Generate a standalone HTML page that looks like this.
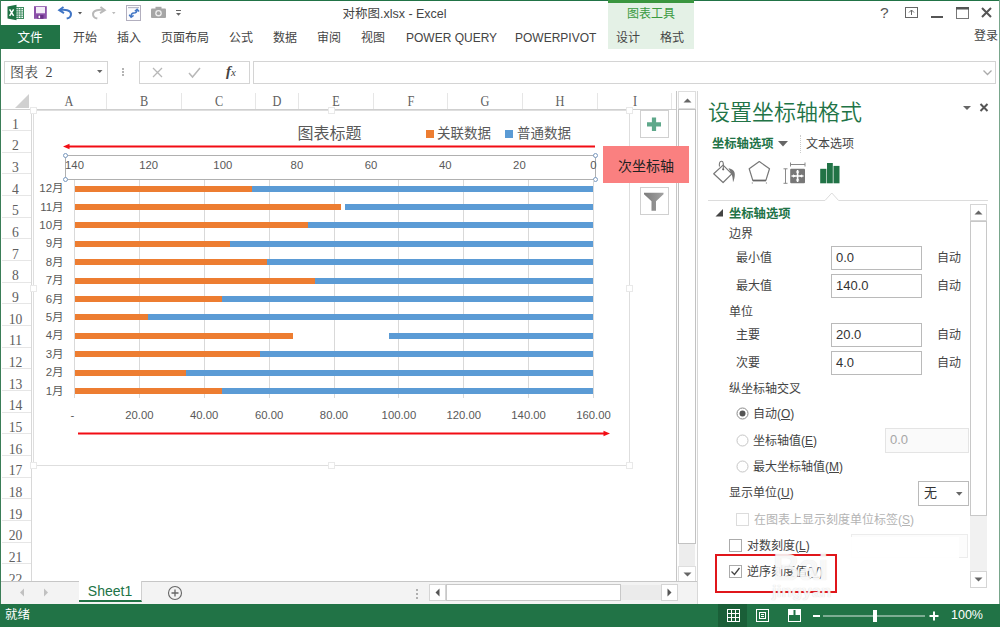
<!DOCTYPE html><html><head><meta charset="utf-8"><title>对称图.xlsx - Excel</title><style>
*{box-sizing:border-box;margin:0;padding:0}
html,body{width:1000px;height:627px;overflow:hidden;background:#fff}
body{position:relative;font-family:"Liberation Sans","Noto Sans CJK SC",sans-serif;font-size:12px;color:#444}
.a{position:absolute}
.t{position:absolute;white-space:nowrap;line-height:1}
.c{transform:translateX(-50%)}
.r{transform:translateX(-100%)}
.serif{font-family:"Liberation Serif","Noto Serif CJK SC",serif}
.tab{position:absolute;top:31.500px;font-size:12px;color:#444;white-space:nowrap;line-height:1}
.hdr{position:absolute;top:94px;font-size:15px;color:#606060;line-height:1;transform:translateX(-50%) scaleX(.82)}
.rn{position:absolute;font-size:15.500px;color:#606060;transform:scaleX(.88);line-height:1;width:31px;text-align:center;left:0}
.cat{position:absolute;font-size:11.5px;color:#595959;line-height:1;white-space:nowrap;transform:translateX(-100%);left:63.600px}
.ax{position:absolute;font-size:11.3px;color:#595959;line-height:1;white-space:nowrap;transform:translateX(-50%)}
.lbl{position:absolute;font-size:12px;color:#444;line-height:1;white-space:nowrap}
.inp{position:absolute;border:1px solid #bababa;background:#fff;font-size:13px;color:#333;line-height:1;padding:4px 0 0 4px}
.auto{position:absolute;font-size:12px;color:#444;line-height:1;left:937px}
</style></head><body>
<div class="a" style="left:0;top:0;width:1000px;height:1px;background:#217346"></div>
<div class="a" style="left:0;top:0;width:1px;height:627px;background:#3a7d57"></div>
<div class="a" style="left:999px;top:0;width:1px;height:604px;background:#79a68c;z-index:50"></div>
<div class="t c" style="left:394.500px;top:7.500px;font-size:12.500px;color:#444">对称图.xlsx - Excel</div>
<div class="a" style="left:608px;top:1px;width:86px;height:48px;background:#e4f1e6"></div>
<div class="a" style="left:608px;top:0;width:86px;height:3px;background:#3a963f"></div>
<div class="t c" style="left:651px;top:7.500px;font-size:12px;color:#3a9a3f">图表工具</div>
<div class="a" style="left:0;top:25px;width:60px;height:24px;background:#217346"></div>
<div class="t c" style="left:30px;top:31.500px;font-size:12.500px;color:#fff">文件</div>
<div class="tab" style="left:73px">开始</div>
<div class="tab" style="left:117px">插入</div>
<div class="tab" style="left:161px">页面布局</div>
<div class="tab" style="left:229px">公式</div>
<div class="tab" style="left:273px">数据</div>
<div class="tab" style="left:317px">审阅</div>
<div class="tab" style="left:361px">视图</div>
<div class="tab" style="left:406px">POWER QUERY</div>
<div class="tab" style="left:515px">POWERPIVOT</div>
<div class="tab" style="left:616px">设计</div>
<div class="tab" style="left:660px">格式</div>
<div class="tab" style="left:974px;top:30px">登录</div>
<div class="t" style="left:880px;top:5px;font-size:15.500px;color:#555">?</div>
<svg class="a" style="left:900px;top:0" width="100" height="24" viewBox="0 0 100 24"><rect x="5.5" y="7.5" width="12" height="10" fill="none" stroke="#666"/><path d="M11.5 15v-5m-2.5 2.5l2.5-2.5l2.500 2.500" stroke="#666" fill="none"/><rect x="31" y="16" width="12" height="2" fill="#555"/><rect x="56.500" y="7.500" width="12" height="11" fill="none" stroke="#777" stroke-width="1"/><rect x="56" y="7" width="13" height="2.500" fill="#555"/><path d="M82 8l9 9m0-9l-9 9" stroke="#555" stroke-width="2" fill="none"/></svg>
<svg class="a" style="left:0;top:0" width="200" height="26" viewBox="0 0 200 26">
<rect x="15.500" y="7.500" width="8" height="11" fill="#fff" stroke="#3c8a5e"/><path d="M15.500 9.700h8M15.500 11.900h8M15.500 14.100h8M15.500 16.300h8M18.200 7.500v11M20.900 7.500v11" stroke="#3c8a5e" stroke-width=".9" fill="none"/>
<path d="M7.500 6.500l9-1.700v15.400l-9-1.700z" fill="#1f7244"/>
<path d="M9.600 9.300l4 6.500M13.600 9.300l-4 6.500" stroke="#fff" stroke-width="1.500" fill="none"/>
<rect x="34" y="6.200" width="12.800" height="12.600" fill="#8b50a9"/><rect x="36" y="7" width="9" height="6.300" fill="#f3ecf7"/><rect x="37.500" y="15" width="6" height="3.800" fill="#6a3088"/><rect x="38.500" y="15.600" width="1.600" height="2.600" fill="#fff"/>
<path d="M63.500 7l-4.300 3.100l4.800 3" fill="none" stroke="#3f74c4" stroke-width="1.900"/><path d="M59.800 10.100c5-.6 11-.2 11.200 3.800c.1 2.800-1.800 4.200-4.300 4.700" fill="none" stroke="#3f74c4" stroke-width="2"/>
<path d="M78 12h4l-2 2.500z" fill="#555"/>
<path d="M100.500 7l4.300 3.100l-4.800 3" fill="none" stroke="#b9b9b9" stroke-width="1.900"/><path d="M104.200 10.100c-5-.6-11-.2-11.200 3.800c-.1 2.800 1.800 4.200 4.300 4.700" fill="none" stroke="#b9b9b9" stroke-width="2"/>
<path d="M112 12h3.500l-1.750 2.200z" fill="#bbb"/>
<rect x="126.500" y="5.500" width="14" height="15" fill="#fbfbfd" stroke="#b2afbe"/><rect x="128" y="7" width="11" height="1.200" fill="#b9b9c6"/><path d="M131.200 16.800c-.5-2.500 1-3.800 2.600-3.800c1.800 0 3.200-1 3.200-3.300" fill="none" stroke="#3f74c4" stroke-width="1.500"/><path d="M134.800 11.200l2.300-2l2 2.300" fill="none" stroke="#3f74c4" stroke-width="1.400"/><path d="M129.200 14.800l1.900 2.400l2.500-1.800" fill="none" stroke="#3f74c4" stroke-width="1.400"/>
<rect x="151" y="8.500" width="15" height="9.500" rx="1" fill="#a6a6a6"/><rect x="155.500" y="6.800" width="6" height="2.500" fill="#a6a6a6"/><circle cx="158.500" cy="13.200" r="3.300" fill="#eee"/><circle cx="158.500" cy="13.200" r="1.900" fill="#a6a6a6"/>
<rect x="176" y="10" width="5" height="1" fill="#666"/><path d="M176 13h5l-2.500 2.800z" fill="#666"/>
</svg>
<div class="a" style="left:4px;top:61px;width:104px;height:23px;border:1px solid #d4d4d4;background:#fff"></div>
<div class="t serif" style="left:10px;top:66px;font-size:14px;color:#444;word-spacing:4px">图表 2</div>
<svg class="a" style="left:97px;top:70px" width="6" height="4"><path d="M0 0h5.500l-2.750 3z" fill="#666"/></svg>
<div class="a" style="left:122px;top:68px;width:2px;height:2px;background:#b4b4b4;box-shadow:0 3px 0 #b4b4b4,0 6px 0 #b4b4b4"></div>
<div class="a" style="left:139px;top:61px;width:111px;height:23px;border:1px solid #d4d4d4;background:#fff"></div>
<svg class="a" style="left:139px;top:61px" width="108" height="23" viewBox="0 0 108 23"><path d="M14 7l9 9m0-9l-9 9" stroke="#b8b8b8" stroke-width="1.300" fill="none"/><path d="M50 12l3.500 4l7.500-9" stroke="#b8b8b8" stroke-width="1.500" fill="none"/></svg>
<div class="t serif" style="left:226px;top:64px;font-size:15px;color:#444;font-style:italic"><b>f</b><span style="font-size:11px">x</span></div>
<div class="a" style="left:253px;top:61px;width:743px;height:23px;border:1px solid #d4d4d4;background:#fff"></div>
<svg class="a" style="left:982px;top:69px" width="12" height="8"><path d="M1.500 1.500l4 4l4-4" stroke="#aaa" stroke-width="1.300" fill="none"/></svg>
<div class="a" style="left:1px;top:91px;width:675px;height:19px;background:#fff;border-bottom:1px solid #cfcfcf"></div>
<svg class="a" style="left:14px;top:94px" width="16" height="15"><path d="M15 0v14h-14z" fill="#d0d0d0"/></svg>
<div class="a" style="left:106px;top:93px;width:1px;height:16px;background:#e6e6e6"></div>
<div class="a" style="left:181px;top:93px;width:1px;height:16px;background:#e6e6e6"></div>
<div class="a" style="left:255px;top:93px;width:1px;height:16px;background:#e6e6e6"></div>
<div class="a" style="left:298px;top:93px;width:1px;height:16px;background:#e6e6e6"></div>
<div class="a" style="left:373px;top:93px;width:1px;height:16px;background:#e6e6e6"></div>
<div class="a" style="left:447px;top:93px;width:1px;height:16px;background:#e6e6e6"></div>
<div class="a" style="left:522px;top:93px;width:1px;height:16px;background:#e6e6e6"></div>
<div class="a" style="left:597px;top:93px;width:1px;height:16px;background:#e6e6e6"></div>
<div class="a" style="left:671px;top:93px;width:1px;height:16px;background:#e6e6e6"></div>
<div class="hdr serif" style="left:69.0px">A</div>
<div class="hdr serif" style="left:144.0px">B</div>
<div class="hdr serif" style="left:218.5px">C</div>
<div class="hdr serif" style="left:277.0px">D</div>
<div class="hdr serif" style="left:336.0px">E</div>
<div class="hdr serif" style="left:410.5px">F</div>
<div class="hdr serif" style="left:485.0px">G</div>
<div class="hdr serif" style="left:560.0px">H</div>
<div class="hdr serif" style="left:634.5px">I</div>
<div class="a" style="left:31px;top:110px;width:1px;height:471px;background:#d8d8d8"></div>
<div class="rn serif" style="top:115.5px">1</div>
<div class="a" style="left:2px;top:130px;width:29px;height:1px;background:#e6e6e6"></div>
<div class="rn serif" style="top:137.2px">2</div>
<div class="a" style="left:2px;top:152px;width:29px;height:1px;background:#e6e6e6"></div>
<div class="rn serif" style="top:158.8px">3</div>
<div class="a" style="left:2px;top:173px;width:29px;height:1px;background:#e6e6e6"></div>
<div class="rn serif" style="top:180.5px">4</div>
<div class="a" style="left:2px;top:195px;width:29px;height:1px;background:#e6e6e6"></div>
<div class="rn serif" style="top:202.2px">5</div>
<div class="a" style="left:2px;top:217px;width:29px;height:1px;background:#e6e6e6"></div>
<div class="rn serif" style="top:223.9px">6</div>
<div class="a" style="left:2px;top:238px;width:29px;height:1px;background:#e6e6e6"></div>
<div class="rn serif" style="top:245.5px">7</div>
<div class="a" style="left:2px;top:260px;width:29px;height:1px;background:#e6e6e6"></div>
<div class="rn serif" style="top:267.2px">8</div>
<div class="a" style="left:2px;top:282px;width:29px;height:1px;background:#e6e6e6"></div>
<div class="rn serif" style="top:288.9px">9</div>
<div class="a" style="left:2px;top:303px;width:29px;height:1px;background:#e6e6e6"></div>
<div class="rn serif" style="top:310.5px">10</div>
<div class="a" style="left:2px;top:325px;width:29px;height:1px;background:#e6e6e6"></div>
<div class="rn serif" style="top:332.2px">11</div>
<div class="a" style="left:2px;top:347px;width:29px;height:1px;background:#e6e6e6"></div>
<div class="rn serif" style="top:353.9px">12</div>
<div class="a" style="left:2px;top:368px;width:29px;height:1px;background:#e6e6e6"></div>
<div class="rn serif" style="top:375.5px">13</div>
<div class="a" style="left:2px;top:390px;width:29px;height:1px;background:#e6e6e6"></div>
<div class="rn serif" style="top:397.2px">14</div>
<div class="a" style="left:2px;top:412px;width:29px;height:1px;background:#e6e6e6"></div>
<div class="rn serif" style="top:418.9px">15</div>
<div class="a" style="left:2px;top:433px;width:29px;height:1px;background:#e6e6e6"></div>
<div class="rn serif" style="top:440.6px">16</div>
<div class="a" style="left:2px;top:455px;width:29px;height:1px;background:#e6e6e6"></div>
<div class="rn serif" style="top:462.2px">17</div>
<div class="a" style="left:2px;top:477px;width:29px;height:1px;background:#e6e6e6"></div>
<div class="rn serif" style="top:483.9px">18</div>
<div class="a" style="left:2px;top:498px;width:29px;height:1px;background:#e6e6e6"></div>
<div class="rn serif" style="top:505.6px">19</div>
<div class="a" style="left:2px;top:520px;width:29px;height:1px;background:#e6e6e6"></div>
<div class="rn serif" style="top:527.2px">20</div>
<div class="a" style="left:2px;top:542px;width:29px;height:1px;background:#e6e6e6"></div>
<div class="rn serif" style="top:548.9px">21</div>
<div class="a" style="left:2px;top:563px;width:29px;height:1px;background:#e6e6e6"></div>
<div class="rn serif" style="top:570.6px">22</div>
<div class="a" style="left:676px;top:91px;width:1px;height:494px;background:#c6c6c6"></div>
<div class="a" style="left:33px;top:110px;width:597px;height:356px;border:1px solid #dedede;background:#fff"></div>
<div class="a" style="left:30px;top:107px;width:7px;height:7px;border:1px solid #e9e9e9;background:#fff"></div>
<div class="a" style="left:328px;top:107px;width:7px;height:7px;border:1px solid #e9e9e9;background:#fff"></div>
<div class="a" style="left:626px;top:107px;width:7px;height:7px;border:1px solid #e9e9e9;background:#fff"></div>
<div class="a" style="left:30px;top:285px;width:7px;height:7px;border:1px solid #e9e9e9;background:#fff"></div>
<div class="a" style="left:626px;top:285px;width:7px;height:7px;border:1px solid #e9e9e9;background:#fff"></div>
<div class="a" style="left:30px;top:462px;width:7px;height:7px;border:1px solid #e9e9e9;background:#fff"></div>
<div class="a" style="left:328px;top:462px;width:7px;height:7px;border:1px solid #e9e9e9;background:#fff"></div>
<div class="a" style="left:626px;top:462px;width:7px;height:7px;border:1px solid #e9e9e9;background:#fff"></div>
<div class="t c" style="left:329.500px;top:126px;font-size:16px;color:#595959">图表标题</div>
<div class="a" style="left:426px;top:130px;width:8px;height:8px;background:#ed7d31"></div>
<div class="t" style="left:437px;top:127px;font-size:13.500px;color:#595959">关联数据</div>
<div class="a" style="left:505px;top:130px;width:8px;height:8px;background:#5b9bd5"></div>
<div class="t" style="left:517px;top:127px;font-size:13.500px;color:#595959">普通数据</div>
<svg class="a" style="left:55px;top:140px" width="560" height="12"><path d="M13 6.500H540" stroke="#f20d14" stroke-width="1.800"/><path d="M8 6.500l6.500-2.800v5.600z" fill="#f20d14"/></svg>
<svg class="a" style="left:70px;top:427px" width="545" height="12"><path d="M8 6.500H534" stroke="#f20d14" stroke-width="1.800"/><path d="M540 6.500l-6.500-2.800v5.600z" fill="#f20d14"/></svg>
<div class="a" style="left:65px;top:155px;width:531px;height:25px;border:1px solid #b0b0b0"></div>
<div class="a" style="left:62.5px;top:152.5px;width:5.500px;height:5.500px;border:1px solid #7a9abf;border-radius:50%;background:#fff"></div>
<div class="a" style="left:592.5px;top:152.5px;width:5.500px;height:5.500px;border:1px solid #7a9abf;border-radius:50%;background:#fff"></div>
<div class="a" style="left:62.5px;top:176.5px;width:5.500px;height:5.500px;border:1px solid #7a9abf;border-radius:50%;background:#fff"></div>
<div class="a" style="left:592.5px;top:176.5px;width:5.500px;height:5.500px;border:1px solid #7a9abf;border-radius:50%;background:#fff"></div>
<div class="a" style="left:74px;top:180px;width:1px;height:218px;background:#d9d9d9"></div>
<div class="a" style="left:139px;top:180px;width:1px;height:218px;background:#d9d9d9"></div>
<div class="a" style="left:204px;top:180px;width:1px;height:218px;background:#d9d9d9"></div>
<div class="a" style="left:269px;top:180px;width:1px;height:218px;background:#d9d9d9"></div>
<div class="a" style="left:334px;top:180px;width:1px;height:218px;background:#d9d9d9"></div>
<div class="a" style="left:398px;top:180px;width:1px;height:218px;background:#d9d9d9"></div>
<div class="a" style="left:463px;top:180px;width:1px;height:218px;background:#d9d9d9"></div>
<div class="a" style="left:528px;top:180px;width:1px;height:218px;background:#d9d9d9"></div>
<div class="a" style="left:593px;top:180px;width:1px;height:218px;background:#d9d9d9"></div>
<div class="ax" style="left:74.5px;top:159.500px">140</div>
<div class="ax" style="left:148.6px;top:159.500px">120</div>
<div class="ax" style="left:222.8px;top:159.500px">100</div>
<div class="ax" style="left:296.9px;top:159.500px">80</div>
<div class="ax" style="left:371.1px;top:159.500px">60</div>
<div class="ax" style="left:445.2px;top:159.500px">40</div>
<div class="ax" style="left:519.4px;top:159.500px">20</div>
<div class="ax" style="left:593.5px;top:159.500px">0</div>
<div class="ax" style="left:72.5px;top:410px">-</div>
<div class="ax" style="left:139.4px;top:410px">20.00</div>
<div class="ax" style="left:204.2px;top:410px">40.00</div>
<div class="ax" style="left:269.1px;top:410px">60.00</div>
<div class="ax" style="left:334.0px;top:410px">80.00</div>
<div class="ax" style="left:398.9px;top:410px">100.00</div>
<div class="ax" style="left:463.8px;top:410px">120.00</div>
<div class="ax" style="left:528.6px;top:410px">140.00</div>
<div class="ax" style="left:593.5px;top:410px">160.00</div>
<div class="cat" style="top:183.2px">12月</div>
<div class="a" style="left:75px;top:186px;width:177.0px;height:6px;background:#ed7d31"></div>
<div class="a" style="left:252.0px;top:186px;width:341.0px;height:6px;background:#5b9bd5"></div>
<div class="cat" style="top:201.6px">11月</div>
<div class="a" style="left:75px;top:204px;width:266.0px;height:6px;background:#ed7d31"></div>
<div class="a" style="left:345.0px;top:204px;width:248.0px;height:6px;background:#5b9bd5"></div>
<div class="cat" style="top:220.0px">10月</div>
<div class="a" style="left:75px;top:222px;width:232.5px;height:6px;background:#ed7d31"></div>
<div class="a" style="left:307.5px;top:222px;width:285.5px;height:6px;background:#5b9bd5"></div>
<div class="cat" style="top:238.4px">9月</div>
<div class="a" style="left:75px;top:241px;width:155.0px;height:6px;background:#ed7d31"></div>
<div class="a" style="left:230.0px;top:241px;width:363.0px;height:6px;background:#5b9bd5"></div>
<div class="cat" style="top:256.8px">8月</div>
<div class="a" style="left:75px;top:259px;width:191.5px;height:6px;background:#ed7d31"></div>
<div class="a" style="left:266.5px;top:259px;width:326.5px;height:6px;background:#5b9bd5"></div>
<div class="cat" style="top:275.2px">7月</div>
<div class="a" style="left:75px;top:278px;width:240.0px;height:6px;background:#ed7d31"></div>
<div class="a" style="left:315.0px;top:278px;width:278.0px;height:6px;background:#5b9bd5"></div>
<div class="cat" style="top:293.6px">6月</div>
<div class="a" style="left:75px;top:296px;width:147.0px;height:6px;background:#ed7d31"></div>
<div class="a" style="left:222.0px;top:296px;width:371.0px;height:6px;background:#5b9bd5"></div>
<div class="cat" style="top:312.0px">5月</div>
<div class="a" style="left:75px;top:314px;width:73.0px;height:6px;background:#ed7d31"></div>
<div class="a" style="left:148.0px;top:314px;width:445.0px;height:6px;background:#5b9bd5"></div>
<div class="cat" style="top:330.4px">4月</div>
<div class="a" style="left:75px;top:333px;width:218.0px;height:6px;background:#ed7d31"></div>
<div class="a" style="left:389.0px;top:333px;width:204.0px;height:6px;background:#5b9bd5"></div>
<div class="cat" style="top:348.8px">3月</div>
<div class="a" style="left:75px;top:351px;width:184.5px;height:6px;background:#ed7d31"></div>
<div class="a" style="left:259.5px;top:351px;width:333.5px;height:6px;background:#5b9bd5"></div>
<div class="cat" style="top:367.2px">2月</div>
<div class="a" style="left:75px;top:370px;width:111.0px;height:6px;background:#ed7d31"></div>
<div class="a" style="left:186.0px;top:370px;width:407.0px;height:6px;background:#5b9bd5"></div>
<div class="cat" style="top:385.6px">1月</div>
<div class="a" style="left:75px;top:388px;width:147.0px;height:6px;background:#ed7d31"></div>
<div class="a" style="left:222.0px;top:388px;width:371.0px;height:6px;background:#5b9bd5"></div>
<div class="a" style="left:640px;top:110px;width:29px;height:28px;border:1px solid #d0d0d0;background:#fff"></div>
<svg class="a" style="left:640px;top:110px" width="29" height="28"><path d="M14 7.500v13.500M7 14.300h14" stroke="#5ea88a" stroke-width="4.200"/></svg>
<div class="a" style="left:640px;top:187px;width:29px;height:28px;border:1px solid #d0d0d0;background:#fff"></div>
<svg class="a" style="left:640px;top:187px" width="29" height="28"><defs><linearGradient id="fg" x1="0" x2="1"><stop offset="0" stop-color="#7c7c7c"/><stop offset="1" stop-color="#a2a2a2"/></linearGradient></defs><path d="M4 5.700h19.500v1.500l-7.500 7v9.500h-4.500v-9.500l-7.500-7z" fill="url(#fg)"/></svg>
<div class="a" style="left:677px;top:91px;width:20px;height:491px;background:#fdfdfd"></div>
<div class="a" style="left:678px;top:91px;width:18px;height:18px;border:1px solid #dedede;background:#fff"></div>
<svg class="a" style="left:679px;top:92px" width="17" height="17"><path d="M4.500 10.500l4-4l4 4z" fill="#666"/></svg>
<div class="a" style="left:678px;top:109px;width:18px;height:435px;border:1px solid #c2c2c2;background:#fff"></div>
<div class="a" style="left:679px;top:544px;width:16px;height:22px;background:#ededed"></div>
<div class="a" style="left:678px;top:566px;width:18px;height:17px;border:1px solid #dedede;background:#fff"></div>
<svg class="a" style="left:679px;top:566px" width="17" height="17"><path d="M4.500 6.500l4 4l4-4z" fill="#666"/></svg>
<div class="a" style="left:603px;top:146px;width:86px;height:37px;background:#fa8080"></div>
<div class="t c" style="left:646px;top:158.500px;font-size:14px;color:#222">次坐标轴</div>
<div class="a" style="left:1px;top:581px;width:697px;height:23px;background:#f3f3f3;border-top:1px solid #c6c6c6"></div>
<svg class="a" style="left:14px;top:586px" width="40" height="14"><path d="M10 2.500v8l-4-4z" fill="#c0c0c0"/><path d="M30 2.500v8l4-4z" fill="#c0c0c0"/></svg>
<div class="a" style="left:79px;top:581px;width:63px;height:21px;background:#fff;border-bottom:2px solid #217346;border-right:1px solid #cfcfcf"></div>
<div class="t c" style="left:110px;top:584px;font-size:14px;color:#217346">Sheet1</div>
<svg class="a" style="left:167px;top:585px" width="16" height="16"><circle cx="8" cy="8" r="6.500" fill="none" stroke="#666" stroke-width="1.100"/><path d="M8 4.500v7M4.500 8h7" stroke="#666" stroke-width="1.300"/></svg>
<div class="a" style="left:416px;top:589px;width:2px;height:2px;background:#b0b0b0;box-shadow:0 4px 0 #b0b0b0,0 8px 0 #b0b0b0"></div>
<div class="a" style="left:429px;top:584px;width:17px;height:17px;border:1px solid #d5d5d5;background:#fff"></div>
<svg class="a" style="left:429px;top:584px" width="17" height="17"><path d="M10.500 4.500l-4 4l4 4z" fill="#555"/></svg>
<div class="a" style="left:446px;top:584px;width:175px;height:17px;border:1px solid #c8c8c8;background:#fff"></div>
<div class="a" style="left:621px;top:585px;width:40px;height:15px;background:#ebebeb"></div>
<div class="a" style="left:661px;top:584px;width:17px;height:17px;border:1px solid #d5d5d5;background:#fff"></div>
<svg class="a" style="left:661px;top:584px" width="17" height="17"><path d="M6.500 4.500l4 4l-4 4z" fill="#555"/></svg>
<div class="a" style="left:0;top:604px;width:1000px;height:23px;background:#217346"></div>
<div class="t" style="left:5px;top:609px;font-size:12.500px;color:#fff">就绪</div>
<div class="a" style="left:718px;top:604px;width:29px;height:23px;background:#1a5f38"></div>
<svg class="a" style="left:700px;top:604px" width="300" height="23" viewBox="0 0 300 23">
<rect x="27.500" y="5.500" width="12" height="12" fill="none" stroke="#fff"/><path d="M31.500 5.500v12M35.500 5.500v12M27.500 9.500h12M27.500 13.500h12" stroke="#fff" fill="none"/>
<rect x="56.500" y="5.500" width="12" height="12" fill="none" stroke="#fff"/><rect x="59.500" y="8.500" width="6" height="6" fill="none" stroke="#fff"/><path d="M61 10.500h3M61 12.500h3" stroke="#fff"/>
<rect x="88.500" y="5.500" width="12" height="12" fill="none" stroke="#fff"/><rect x="89" y="6" width="4.500" height="5" fill="#fff"/><rect x="95.500" y="6" width="5" height="5" fill="#fff"/>
<rect x="113" y="11" width="7" height="2" fill="#fff"/>
<rect x="123" y="11.500" width="102" height="1" fill="#d9e8df"/>
<rect x="173" y="6" width="4" height="12" fill="#fff"/>
<path d="M229.500 12h9M234 7.500v9" stroke="#fff" stroke-width="2"/>
</svg>
<div class="t" style="left:951px;top:609px;font-size:12.500px;color:#fff">100%</div>
<div class="a" style="left:698px;top:91px;width:302px;height:513px;background:#fff"></div>
<div class="a" style="left:697px;top:91px;width:1px;height:513px;background:#d8d8d8"></div>
<div class="t" style="left:708px;top:101.500px;font-size:22px;color:#217346;font-weight:350">设置坐标轴格式</div>
<svg class="a" style="left:962px;top:101px" width="34" height="14"><path d="M1 5h8l-4 4z" fill="#666"/><path d="M18.500 3l7 7m0-7l-7 7" stroke="#555" stroke-width="2" fill="none"/></svg>
<div class="t" style="left:712px;top:138px;font-size:12.300px;color:#217346;font-weight:bold">坐标轴选项</div>
<svg class="a" style="left:778px;top:141px" width="10" height="6"><path d="M0 0h10l-5 5.500z" fill="#666"/></svg>
<div class="a" style="left:800px;top:135px;width:0;height:18px;border-left:1px dotted #ccc"></div>
<div class="t" style="left:806px;top:138px;font-size:12px;color:#444">文本选项</div>
<svg class="a" style="left:708px;top:156px" width="140" height="34" viewBox="0 0 140 34">
<path d="M15.100 9.100l8.700 8.700l-8.700 8.700l-9.400-8.700z" fill="#fff" stroke="#777" stroke-width="1.200" stroke-linejoin="round"/>
<path d="M11.500 10.500c-.5-3 0-5 2-5.200c2-.2 2 2.500 1.800 7.500" fill="none" stroke="#777" stroke-width="1.100"/><circle cx="15.200" cy="13.300" r="1.100" fill="#666"/>
<path d="M20.500 12.300c3.500 .5 6.500 2.500 6.300 6.500c-.1 2.500-.6 5-1.800 7.500c-.2-3.500-.6-6-1.500-8.200z" fill="#777"/>
<path d="M51.300 5.500l10.200 7.300l-3.600 11.600h-13.100l-3.600-11.600z" fill="#fff" stroke="#777" stroke-width="1.200" stroke-linejoin="round"/><path d="M44.800 24.600h13.100" stroke="#666" stroke-width="1.600"/><path d="M44.300 26v2M58.400 26v2" stroke="#bbb"/>
<path d="M77.500 12.800v14.500M75.500 12.800h4M75.500 27.300h4" stroke="#8a8a8a" fill="none"/><path d="M82.500 8.500h14.500M82.500 6.500v4M97 6.500v4" stroke="#8a8a8a" fill="none"/>
<rect x="82.200" y="12.800" width="14.800" height="14.500" rx="1" fill="#777"/><path d="M89.600 14v12M83.500 20h12" stroke="#fff" stroke-width="1.600"/><path d="M89.600 18l-1.800-2.500h3.600zM89.600 22l-1.800 2.500h3.600zM87.600 20l-2.500-1.800v3.600zM91.600 20l2.500-1.800v3.600z" fill="#fff"/>
<rect x="112.200" y="12.800" width="6.200" height="14.500" fill="#217346"/><rect x="119" y="7" width="5.800" height="20.300" fill="#217346"/><rect x="125.500" y="9.900" width="6" height="17.400" fill="#217346"/>
</svg>
<svg class="a" style="left:708px;top:190px" width="280" height="12"><path d="M0 10.500H117l6.800-7.500l6.800 7.500H280" fill="none" stroke="#dcdcdc" stroke-width="1"/></svg>
<svg class="a" style="left:714px;top:208px" width="10" height="9"><path d="M9 1v7.500H1.500z" fill="#444"/></svg>
<div class="t" style="left:729px;top:207.500px;font-size:12.300px;color:#217346;font-weight:bold">坐标轴选项</div>
<div class="lbl" style="left:729px;top:228px">边界</div>
<div class="lbl" style="left:736px;top:252px">最小值</div>
<div class="lbl" style="left:736px;top:280px">最大值</div>
<div class="lbl" style="left:729px;top:305.500px">单位</div>
<div class="lbl" style="left:736px;top:329px">主要</div>
<div class="lbl" style="left:736px;top:357px">次要</div>
<div class="lbl" style="left:729px;top:383px">纵坐标轴交叉</div>
<div class="inp" style="left:831px;top:246px;width:91px;height:24px">0.0</div>
<div class="auto" style="top:252px">自动</div>
<div class="inp" style="left:831px;top:274px;width:91px;height:24px">140.0</div>
<div class="auto" style="top:280px">自动</div>
<div class="inp" style="left:831px;top:323px;width:91px;height:24px">20.0</div>
<div class="auto" style="top:329px">自动</div>
<div class="inp" style="left:831px;top:351px;width:91px;height:24px">4.0</div>
<div class="auto" style="top:357px">自动</div>
<svg class="a" style="left:736px;top:407px" width="13" height="13"><circle cx="6.500" cy="6.500" r="5.500" fill="#fff" stroke="#8a8a8a"/><circle cx="6.500" cy="6.500" r="3" fill="#555"/></svg>
<svg class="a" style="left:736px;top:434px" width="13" height="13"><circle cx="6.500" cy="6.500" r="5.500" fill="#fff" stroke="#c6c6c6"/></svg>
<svg class="a" style="left:736px;top:460px" width="13" height="13"><circle cx="6.500" cy="6.500" r="5.500" fill="#fff" stroke="#c6c6c6"/></svg>
<div class="lbl" style="left:753px;top:408px">自动(<u>O</u>)</div>
<div class="lbl" style="left:753px;top:435px">坐标轴值(<u>E</u>)</div>
<div class="lbl" style="left:753px;top:461px">最大坐标轴值(<u>M</u>)</div>
<div class="inp" style="left:885px;top:428px;width:84px;height:25px;border-color:#e4e4e4;background:#fafafa;color:#a6a6a6">0.0</div>
<div class="lbl" style="left:729px;top:487px">显示单位(<u>U</u>)</div>
<div class="inp" style="left:918px;top:481px;width:51px;height:25px;padding-left:5px">无</div>
<svg class="a" style="left:956px;top:492px" width="7" height="5"><path d="M0 0h6.500l-3.250 3.800z" fill="#666"/></svg>
<div class="a" style="left:736px;top:513px;width:13px;height:13px;border:1px solid #dcdcdc;background:#fff"></div>
<div class="lbl" style="left:754px;top:514px;color:#b4b4b4">在图表上显示刻度单位标签(<u>S</u>)</div>
<div class="a" style="left:729px;top:539px;width:13px;height:13px;border:1px solid #ababab;background:#fff"></div>
<div class="lbl" style="left:747px;top:540px">对数刻度(<u>L</u>)</div>
<div class="a" style="left:729px;top:565px;width:13px;height:13px;border:1px solid #ababab;background:#fff"></div>
<svg class="a" style="left:729px;top:565px" width="13" height="13"><path d="M2.500 6.500l3 3l5-6.500" fill="none" stroke="#444" stroke-width="1.300"/></svg>
<div class="lbl" style="left:747px;top:566px">逆序刻度值(<u>V</u>)</div>
<div class="a" style="left:715px;top:554px;width:122px;height:39px;border:2.500px solid #e0161b"></div>
<div class="a" style="left:851px;top:534px;width:117px;height:24px;border:1px solid #ececec;background:#fcfcfc"></div>
<div class="a" style="left:847px;top:537px;width:112px;height:66px;background:rgba(255,255,255,0.920)"></div>
<div class="t" style="left:773px;top:549px;font-size:37px;font-weight:bold;color:rgba(255,255,255,0.800);letter-spacing:-1px;text-shadow:0 0 1px rgba(200,200,200,0.600)">Bai</div>
<div class="t" style="left:772px;top:583px;font-size:17px;font-weight:bold;color:rgba(255,255,255,0.850);text-shadow:0 0 1px rgba(190,190,190,0.700)">jingyan</div>
<div class="a" style="left:970px;top:204px;width:17px;height:384px;background:#f1f1f1"></div>
<div class="a" style="left:970px;top:204px;width:17px;height:17px;border:1px solid #d5d5d5;background:#fff"></div>
<svg class="a" style="left:970px;top:204px" width="17" height="17"><path d="M4.500 10.500l4-4l4 4z" fill="#666"/></svg>
<div class="a" style="left:970px;top:221px;width:17px;height:295px;border:1px solid #c8c8c8;background:#fff"></div>
<div class="a" style="left:970px;top:571px;width:17px;height:17px;border:1px solid #d5d5d5;background:#fff"></div>
<svg class="a" style="left:970px;top:571px" width="17" height="17"><path d="M4.500 6.500l4 4l4-4z" fill="#666"/></svg>
</body></html>
